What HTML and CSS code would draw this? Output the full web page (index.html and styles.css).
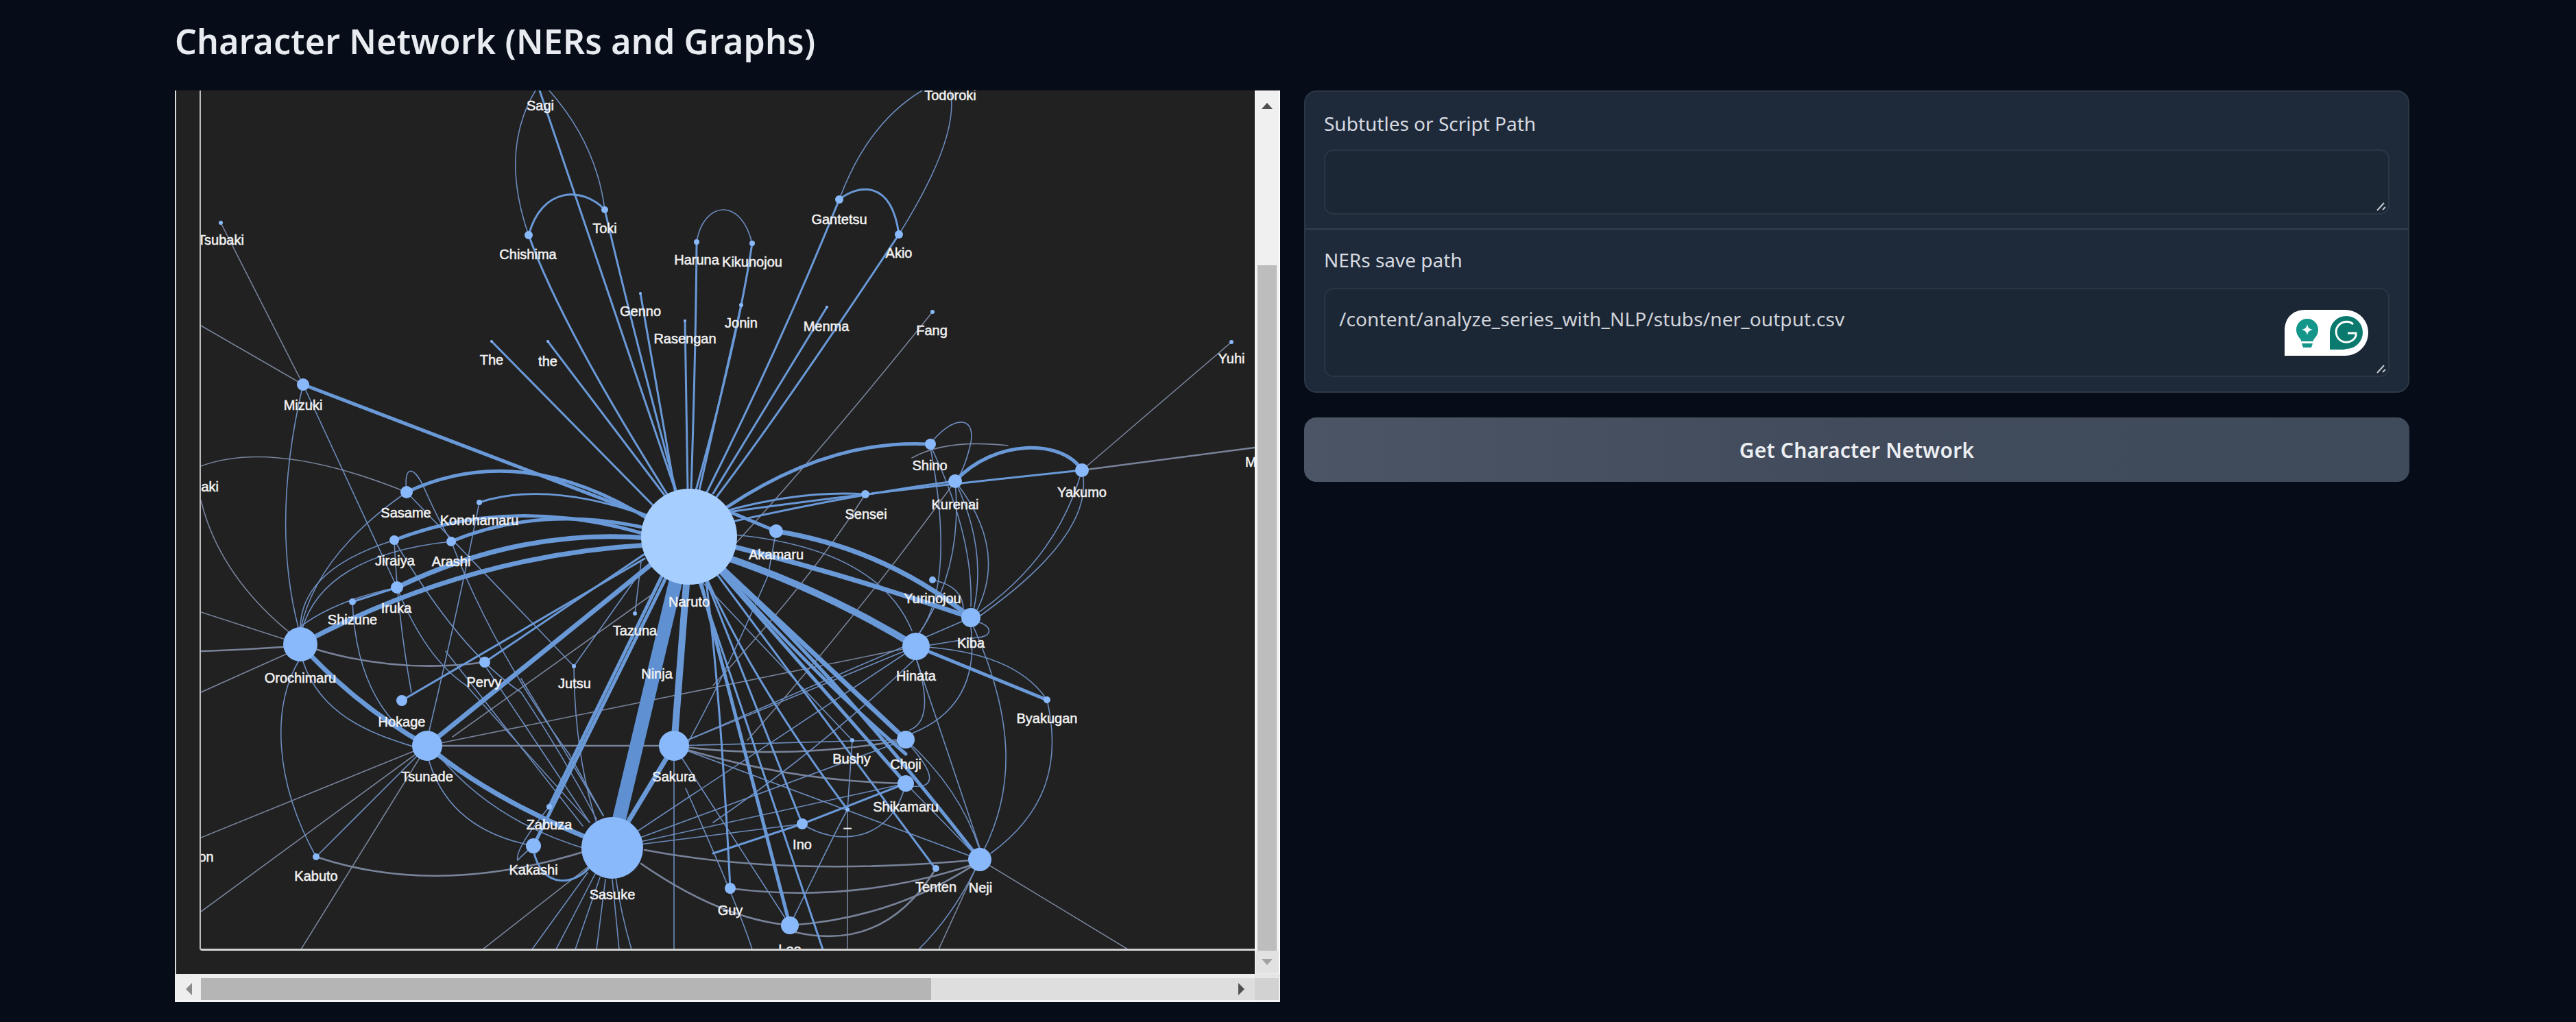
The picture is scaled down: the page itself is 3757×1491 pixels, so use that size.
FILE: index.html
```html
<!DOCTYPE html>
<html lang="en">
<head>
<meta charset="utf-8">
<title>Character Network</title>
<link rel="stylesheet" href="styles.css">
</head>
<body>
<main class="page">
  <h2 class="title">Character Network (NERs and Graphs)</h2>
  <div class="columns">
    <section class="frame">
      <div class="viewport">
        <div class="plot">
          <svg class="graph" viewBox="293 132 1537 1253" width="1537" height="1253">
            <g class="edge grey w1">
              <path d="M322,325 L442,561"/>
              <path d="M293,475 L442,561"/>
              <path d="M293,680 Q400,640 593,718"/>
              <path d="M293,730 Q320,840 425,925"/>
              <path d="M293,893 L438,940"/>
              <path d="M293,1010 L438,945"/>
              <path d="M623,1088 L293,1222"/>
              <path d="M623,1088 L293,1330"/>
              <path d="M623,1088 L439,1385"/>
              <path d="M893,1237 L704,1385"/>
              <path d="M1360,455 Q1180,680 1020,850"/>
              <path d="M1796,499 L1578,686"/>
              <path d="M1429,1254 L1645,1385"/>
              <path d="M1429,1254 L1369,1385"/>
              <path d="M950,868 L660,1075"/>
              <path d="M1236,1181 L1236,1385"/>
              <path d="M1336,943 L623,1088"/>
              <path d="M1470,650 Q1380,640 1330,668"/>
              <path d="M1262,721 Q1180,850 1040,1000"/>
              <path d="M1393,702 Q1250,900 1090,1080"/>
            </g>
            <g class="edge grey w2">
              <path d="M293,950 Q360,948 438,942"/>
              <path d="M1578,686 L1830,653"/>
              <path d="M461,1250 Q640,1310 860,1240"/>
              <path d="M623,1088 L983,1088"/>
              <path d="M1321,1079 Q1150,1110 983,1088"/>
              <path d="M1321,1143 Q1150,1140 983,1088"/>
              <path d="M940,1240 Q1150,1280 1429,1254"/>
              <path d="M1065,1296 Q1250,1320 1429,1258"/>
              <path d="M438,940 Q570,985 707,966"/>
              <path d="M935,1260 Q1050,1340 1152,1350"/>
              <path d="M1152,1350 Q1300,1340 1420,1262"/>
              <path d="M1160,1360 Q1290,1390 1365,1267"/>
            </g>
            <g class="edge blue w1">
              <path d="M771,343 Q728,220 781,132"/>
              <path d="M882,306 Q870,210 801,132"/>
              <path d="M1224,291 Q1265,180 1345,132"/>
              <path d="M1311,342 Q1400,200 1386,132"/>
              <path d="M1016,353 C1025,295 1080,285 1097,355"/>
              <path d="M442,561 Q395,760 435,915"/>
              <path d="M442,561 L579,857"/>
              <path d="M593,718 C588,675 605,680 620,715 Q640,760 658,790"/>
              <path d="M593,718 Q460,810 438,920"/>
              <path d="M575,788 Q440,830 438,915"/>
              <path d="M658,790 Q470,810 440,920"/>
              <path d="M579,857 Q470,880 420,930"/>
              <path d="M699,733 Q670,880 625,1070"/>
              <path d="M438,950 C460,1050 560,1075 605,1090"/>
              <path d="M623,1100 Q650,1210 778,1234"/>
              <path d="M461,1250 L623,1088"/>
              <path d="M461,1250 C400,1140 395,1030 438,960"/>
              <path d="M514,878 Q520,1020 605,1080"/>
              <path d="M579,857 Q620,960 680,1000 Q760,1090 860,1200"/>
              <path d="M575,788 Q580,900 600,1010"/>
              <path d="M575,788 Q670,950 760,1010 Q820,1100 870,1195"/>
              <path d="M658,790 Q720,950 830,1100 L880,1190"/>
              <path d="M593,718 L837,972"/>
              <path d="M837,972 L930,840"/>
              <path d="M926,895 L935,820"/>
              <path d="M837,972 Q838,1100 870,1200"/>
              <path d="M650,950 L850,1205"/>
              <path d="M710,975 L860,1200"/>
              <path d="M760,990 L880,1190"/>
              <path d="M638,1100 Q720,1200 860,1240"/>
              <path d="M776,1385 L857,1273"/>
              <path d="M811,1385 L868,1275"/>
              <path d="M839,1385 L875,1280"/>
              <path d="M870,1385 L883,1283"/>
              <path d="M903,1385 L893,1283"/>
              <path d="M921,1385 Q905,1330 898,1280"/>
              <path d="M983,1088 L983,1385"/>
              <path d="M983,1088 L1152,1350"/>
              <path d="M983,1088 L1429,1254"/>
              <path d="M983,1088 L1321,1079"/>
              <path d="M893,1237 L1336,943"/>
              <path d="M893,1237 L1321,1079"/>
              <path d="M893,1237 L1321,1143"/>
              <path d="M893,1237 L1170,1202"/>
              <path d="M983,1088 L1336,943"/>
              <path d="M983,1088 L1416,901"/>
              <path d="M1356,648 C1395,600 1425,610 1415,650 Q1405,690 1393,702"/>
              <path d="M1356,648 Q1395,850 1340,925"/>
              <path d="M1356,648 Q1420,780 1416,885"/>
              <path d="M1393,702 Q1440,800 1420,890"/>
              <path d="M1393,702 Q1470,800 1425,890"/>
              <path d="M1393,702 Q1405,830 1340,925"/>
              <path d="M1578,686 Q1540,820 1416,901"/>
              <path d="M1578,686 Q1600,780 1420,905"/>
              <path d="M1360,846 Q1405,855 1405,890"/>
              <path d="M1428,908 C1450,915 1445,930 1425,930 L1345,943"/>
              <path d="M1070,780 Q1280,800 1330,920"/>
              <path d="M1336,943 Q1480,950 1527,1021"/>
              <path d="M1527,1021 C1550,1120 1520,1190 1445,1245"/>
              <path d="M1420,915 C1480,1050 1480,1150 1435,1240"/>
              <path d="M1336,960 Q1365,1050 1327,1065"/>
              <path d="M1416,915 Q1430,1030 1330,1070"/>
              <path d="M1336,960 L1430,1240"/>
              <path d="M1321,1079 Q1400,1150 1429,1240"/>
              <path d="M1321,1143 L1429,1254"/>
              <path d="M1243,1080 L1236,1181"/>
              <path d="M1170,1202 C1220,1235 1300,1230 1321,1143"/>
              <path d="M1330,1147 C1365,1150 1365,1130 1325,1085"/>
              <path d="M1152,1350 Q1220,1210 1236,1181"/>
              <path d="M1025,850 L1243,1080"/>
              <path d="M1429,1254 Q1395,1330 1340,1385"/>
              <path d="M801,1177 Q750,1240 755,1255 Q770,1240 778,1234"/>
              <path d="M1097,1385 Q1080,1330 1000,1150"/>
              <path d="M1132,775 L1120,840 Q1060,980 1000,1090"/>
              <path d="M1336,960 Q1200,1090 1040,1200"/>
            </g>
            <g class="edge blue w3">
              <path d="M771,343 C790,272 850,272 882,306"/>
              <path d="M1224,291 C1250,270 1300,260 1311,342"/>
              <path d="M787,132 L1000,760"/>
              <path d="M771,343 Q820,480 985,740"/>
              <path d="M882,306 Q925,490 990,730"/>
              <path d="M934,428 L985,720"/>
              <path d="M999,468 L1003,715"/>
              <path d="M1016,353 Q1015,500 1008,715"/>
              <path d="M1097,355 Q1075,500 1015,715"/>
              <path d="M1081,445 L1020,715"/>
              <path d="M1224,291 Q1140,500 1030,720"/>
              <path d="M1206,448 L1040,720"/>
              <path d="M1311,342 Q1140,600 1045,725"/>
              <path d="M717,498 L960,745"/>
              <path d="M799,498 L975,730"/>
              <path d="M699,733 Q800,700 950,755"/>
              <path d="M514,878 L579,857"/>
              <path d="M707,966 L945,805"/>
              <path d="M586,1022 L940,815"/>
              <path d="M1060,745 Q1170,715 1262,721"/>
              <path d="M1050,765 Q1250,720 1393,702"/>
              <path d="M1040,750 Q1250,720 1578,686"/>
              <path d="M1005,783 L1364,1267"/>
              <path d="M1005,783 Q1075,965 1236,1181"/>
              <path d="M1030,850 Q1050,1000 1065,1296"/>
              <path d="M1170,1202 L1321,1143"/>
              <path d="M1005,783 L1170,1202"/>
              <path d="M1020,850 L1200,1385"/>
              <path d="M1040,1245 L1170,1202"/>
              <path d="M778,1240 C790,1300 840,1290 860,1265"/>
            </g>
            <g class="edge blue w5">
              <path d="M442,561 L950,755"/>
              <path d="M593,718 Q760,640 950,760"/>
              <path d="M575,788 Q750,720 950,782"/>
              <path d="M658,790 Q790,735 950,772"/>
              <path d="M1060,740 Q1210,640 1356,648"/>
              <path d="M1060,745 L1132,775"/>
              <path d="M1393,702 C1450,640 1550,640 1578,686"/>
              <path d="M1336,943 L1527,1021"/>
              <path d="M1005,783 L1152,1350"/>
              <path d="M801,1177 L985,800"/>
              <path d="M778,1234 L975,835"/>
              <path d="M1040,820 Q1200,960 1429,1254"/>
              <path d="M1005,783 L1321,1143"/>
              <path d="M1030,805 Q1160,960 1321,1100"/>
            </g>
            <g class="edge blue w7">
              <path d="M438,940 Q680,810 945,795"/>
              <path d="M579,857 Q760,770 945,785"/>
              <path d="M623,1088 L960,815"/>
              <path d="M438,940 Q520,1030 623,1088"/>
              <path d="M623,1088 Q720,1170 893,1237"/>
              <path d="M1132,775 Q1290,800 1416,901"/>
              <path d="M1060,795 Q1240,840 1416,901"/>
              <path d="M1005,783 L1321,1079"/>
              <path d="M893,1237 L983,1088"/>
            </g>
            <g class="edge blue w10">
              <path d="M983,1088 L1005,800"/>
              <path d="M1050,810 Q1200,860 1336,943"/>
            </g>
            <g class="edge deep w18">
              <path d="M893,1237 L985,850"/>
            </g>

            <g class="node">
              <circle cx="882" cy="306" r="5"/><circle cx="771" cy="343" r="6"/>
              <circle cx="322" cy="325" r="3"/><circle cx="934" cy="428" r="2"/>
              <circle cx="999" cy="468" r="2"/><circle cx="1016" cy="353" r="4"/>
              <circle cx="1097" cy="355" r="4"/><circle cx="1081" cy="445" r="3"/>
              <circle cx="1224" cy="291" r="6"/><circle cx="1311" cy="342" r="6"/>
              <circle cx="1206" cy="448" r="2"/><circle cx="1360" cy="455" r="3"/>
              <circle cx="1796" cy="499" r="3"/><circle cx="442" cy="561" r="9"/>
              <circle cx="717" cy="498" r="2"/><circle cx="799" cy="498" r="2"/>
              <circle cx="593" cy="718" r="9"/><circle cx="699" cy="733" r="4"/>
              <circle cx="575" cy="788" r="7"/><circle cx="658" cy="790" r="7"/>
              <circle cx="579" cy="857" r="9"/><circle cx="514" cy="878" r="5"/>
              <circle cx="438" cy="940" r="25"/><circle cx="926" cy="895" r="3"/>
              <circle cx="707" cy="966" r="8"/><circle cx="837" cy="972" r="3"/>
              <circle cx="1357" cy="648" r="8"/><circle cx="1393" cy="702" r="10"/>
              <circle cx="1578" cy="686" r="10"/><circle cx="1262" cy="721" r="6"/>
              <circle cx="1132" cy="775" r="10"/><circle cx="1360" cy="846" r="5"/>
              <circle cx="1416" cy="901" r="14"/><circle cx="1336" cy="943" r="20"/>
              <circle cx="1527" cy="1021" r="5"/><circle cx="1321" cy="1079" r="13"/>
              <circle cx="586" cy="1022" r="8"/><circle cx="623" cy="1088" r="22"/>
              <circle cx="983" cy="1088" r="22"/><circle cx="801" cy="1177" r="4"/>
              <circle cx="778" cy="1234" r="11"/><circle cx="461" cy="1250" r="5"/>
              <circle cx="1243" cy="1080" r="3"/><circle cx="1321" cy="1143" r="12"/>
              <circle cx="1236" cy="1181" r="3"/><circle cx="1170" cy="1202" r="8"/>
              <circle cx="1429" cy="1254" r="17"/><circle cx="1365" cy="1267" r="5"/>
              <circle cx="1065" cy="1296" r="8"/><circle cx="1152" cy="1350" r="13"/>
              <circle cx="893" cy="1237" r="45"/>
            </g>
            <circle class="hub" cx="1005" cy="783" r="70"/>

            <g class="label">
              <text x="788" y="161">Sagi</text><text x="1386" y="146">Todoroki</text>
              <text x="322" y="357">Tsubaki</text><text x="882" y="340">Toki</text>
              <text x="770" y="378">Chishima</text><text x="934" y="461">Genno</text>
              <text x="999" y="501">Rasengan</text><text x="1016" y="386">Haruna</text>
              <text x="1097" y="389">Kikunojou</text><text x="1224" y="327">Gantetsu</text>
              <text x="1311" y="376">Akio</text><text x="1081" y="478">Jonin</text>
              <text x="1205" y="483">Menma</text><text x="1359" y="489">Fang</text>
              <text x="1796" y="530">Yuhi</text><text x="717" y="532">The</text>
              <text x="799" y="534">the</text><text x="442" y="598">Mizuki</text>
              <text x="289" y="717">Sasaki</text><text x="592" y="755">Sasame</text>
              <text x="699" y="766">Konohamaru</text><text x="576" y="825">Jiraiya</text>
              <text x="658" y="826">Arashi</text><text x="578" y="894">Iruka</text>
              <text x="514" y="911">Shizune</text><text x="438" y="996">Orochimaru</text>
              <text x="1005" y="885">Naruto</text><text x="926" y="927">Tazuna</text>
              <text x="958" y="990">Ninja</text><text x="706" y="1002">Pervy</text>
              <text x="838" y="1004">Jutsu</text><text x="1356" y="686">Shino</text>
              <text x="1393" y="743">Kurenai</text><text x="1578" y="725">Yakumo</text>
              <text x="1263" y="757">Sensei</text><text x="1132" y="816">Akamaru</text>
              <text x="1360" y="880">Yurinojou</text><text x="1416" y="945">Kiba</text>
              <text x="1336" y="993">Hinata</text><text x="1527" y="1055">Byakugan</text>
              <text x="1321" y="1122">Choji</text><text x="586" y="1060">Hokage</text>
              <text x="623" y="1140">Tsunade</text><text x="983" y="1140">Sakura</text>
              <text x="801" y="1210">Zabuza</text><text x="778" y="1276">Kakashi</text>
              <text x="461" y="1285">Kabuto</text><text x="290" y="1257">Jiron</text>
              <text x="1242" y="1114">Bushy</text><text x="1321" y="1184">Shikamaru</text>
              <text x="1236" y="1214">–</text><text x="1170" y="1239">Ino</text>
              <text x="1430" y="1302">Neji</text><text x="1365" y="1301">Tenten</text>
              <text x="1065" y="1335">Guy</text><text x="1152" y="1392">Lee</text>
              <text x="893" y="1312">Sasuke</text><text x="1835" y="681">Mito</text>
            </g>
          </svg>
        </div>
      </div>
      <div class="vbar">
        <span class="arrow"><i class="tri up"></i></span>
        <div class="vthumb"></div>
        <span class="arrow"><i class="tri down"></i></span>
      </div>
      <div class="hbar">
        <span class="arrow"><i class="tri left"></i></span>
        <div class="hthumb"></div>
        <span class="arrow"><i class="tri right"></i></span>
      </div>
      <div class="corner"></div>
    </section>

    <section class="side">
      <div class="panel">
        <div class="field field-first">
          <label class="field-label">Subtutles or Script Path</label>
          <div class="input input-short">
            <svg class="grip" viewBox="0 0 16 16" width="16" height="16"><path d="M2 14 L12 3 M10 13 L14 9"/></svg>
          </div>
        </div>
        <div class="field">
          <label class="field-label">NERs save path</label>
          <div class="input input-tall">
            <span class="value">/content/analyze_series_with_NLP/stubs/ner_output.csv</span>
            <svg class="grammarly" viewBox="0 0 122 67" width="122" height="67">
              <path class="gr-bg" d="M0 67 V30 C0 12 12 0 30 0 H88 C107 0 122 15 122 33 C122 52 107 67 88 67 Z"/>
              <path class="gr-bulb" d="M33 13 C42 13 49 20 49 29 C49 36 45 40 42 44 V46 H24 V44 C21 40 17 36 17 29 C17 20 24 13 33 13 Z M25 49 H41 L39 55 H27 Z"/>
              <path class="gr-star" d="M33 21 C34 26 36 28 41 29 C36 30 34 32 33 37 C32 32 30 30 25 29 C30 28 32 26 33 21 Z"/>
              <path class="gr-g" d="M66 58 V33 A24 24 0 1 1 90 57 L86 58 Z"/>
              <path class="gr-letter" d="M100 21 A15 15 0 1 0 104 38 V34 H92"/>
            </svg>
            <svg class="grip" viewBox="0 0 16 16" width="16" height="16"><path d="M2 14 L12 3 M10 13 L14 9"/></svg>
          </div>
        </div>
      </div>
      <button class="action">Get Character Network</button>
    </section>
  </div>
</main>
</body>
</html>
```
FILE: styles.css
```css
html, body {
  margin: 0;
  padding: 0;
  background: #070d18;
}
.page {
  width: 3757px;
  height: 1491px;
  box-sizing: border-box;
  padding: 0 243px 0 255px;
  overflow: hidden;
  font-family: "Noto Sans", "Open Sans", sans-serif;
  color: #e5e7eb;
}
.title {
  margin: 0;
  height: 132px;
  padding-top: 28px;
  box-sizing: border-box;
  font-size: 50px;
  line-height: 64px;
  font-weight: 600;
  letter-spacing: 0.2px;
  color: #e8ebf0;
}
.columns {
  display: flex;
  gap: 35px;
  align-items: flex-start;
}

/* embedded network frame */
.frame {
  width: 1612px;
  height: 1330px;
  flex: none;
  display: grid;
  grid-template-columns: 1fr 37px;
  grid-template-rows: 1fr 41px;
}
.viewport {
  background: #212121;
  border-left: 2px solid #dcdcdc;
  padding: 0 0 34px 34px;
  min-width: 0;
  min-height: 0;
}
.plot {
  height: 100%;
  box-sizing: border-box;
  border-left: 2px solid #bdbdbd;
  border-bottom: 3px solid #d2d2d2;
  border-bottom-left-radius: 4px;
  overflow: hidden;
}
.graph {
  display: block;
}
.edge {
  fill: none;
  stroke-linecap: round;
}
.edge.grey { stroke: #78839a; }
.edge.blue { stroke: #6a99d8; }
.edge.blue.w1 { stroke: #6c8cbe; }
.edge.deep { stroke: #5f90d2; }
.w1 { stroke-width: 1.6px; }
.w2 { stroke-width: 2.6px; }
.w3 { stroke-width: 3px; }
.w5 { stroke-width: 5px; }
.w7 { stroke-width: 7px; }
.w10 { stroke-width: 10px; }
.w18 { stroke-width: 20px; }
.node { fill: #89b9fb; }
.hub { fill: #a6cfff; }
.label text {
  font-family: "Liberation Sans", Arial, sans-serif;
  font-size: 20px;
  fill: #f2f2f2;
  text-anchor: middle;
  stroke: #f2f2f2;
  stroke-width: 0.5px;
}

/* scrollbars */
.vbar {
  background: #f0f0f0;
  border-left: 1px solid #fff;
  border-right: 2px solid #fff;
  display: flex;
  flex-direction: column;
  align-items: stretch;
}
.vbar .arrow {
  height: 44px;
  display: flex;
  align-items: center;
  justify-content: center;
}
.vbar .arrow:last-child {
  height: 33px;
  background: #e2e2e2;
}
.vthumb {
  margin: 211px 3px 0;
  height: 1000px;
  background: #bdbdbd;
}
.hbar {
  background: #dedede;
  border-top: 6px solid #ededed;
  border-bottom: 3px solid #f4f4f4;
  border-left: 2px solid #f4f4f4;
  display: flex;
  align-items: center;
}
.hbar .arrow {
  width: 36px;
  display: flex;
  align-items: center;
  justify-content: center;
  flex: none;
}
.hbar .arrow:first-child {
  background: #eeeeee;
  height: 100%;
}
.hbar .arrow:last-child {
  margin-left: auto;
  width: 40px;
}
.hthumb {
  width: 1065px;
  height: 100%;
  background: #b5b5b5;
}
.corner {
  background: #d2d2d2;
  border-right: 2px solid #f2f2f2;
  border-bottom: 3px solid #f2f2f2;
  border-top: 6px solid #e6e6e6;
}
.tri {
  display: block;
  width: 0;
  height: 0;
  border-style: solid;
  border-color: transparent;
}
.tri.up { border-width: 0 8px 9px; border-bottom-color: #505050; }
.tri.down { border-width: 9px 8px 0; border-top-color: #a3a3a3; }
.tri.left { border-width: 9px 9px 9px 0; border-right-color: #8a8a8a; }
.tri.right { border-width: 9px 0 9px 9px; border-left-color: #505050; }

/* right column */
.side {
  width: 1612px;
  flex: none;
  display: flex;
  flex-direction: column;
  gap: 36px;
}
.panel {
  background: #1e2a3a;
  border: 2px solid #2c3746;
  border-radius: 18px;
  box-sizing: border-box;
  height: 441px;
}
.field {
  padding: 0 27px;
}
.field-first {
  height: 201px;
  box-sizing: border-box;
  border-bottom: 2px solid #323e4f;
}
.field-label {
  display: block;
  padding-top: 26px;
  height: 58px;
  box-sizing: content-box;
  font-size: 28px;
  line-height: 40px;
  color: #d6dae0;
}
.field + .field .field-label {
  padding-top: 24px;
  height: 61px;
}
.input {
  position: relative;
  background: #1c2736;
  border: 2px solid #2a3545;
  border-radius: 14px;
  box-sizing: border-box;
}
.input-short { height: 95px; }
.input-tall {
  height: 130px;
  padding: 23px 20px 0;
}
.value {
  display: block;
  font-size: 28px;
  line-height: 40px;
  letter-spacing: 0.1px;
  color: #d0d4da;
}
.grip {
  position: absolute;
  right: 2px;
  bottom: 2px;
}
.grip path {
  fill: none;
  stroke: #c4c8cf;
  stroke-width: 2px;
}
.grammarly {
  position: absolute;
  left: 1399px;
  top: 30px;
}
.gr-bg { fill: #ffffff; }
.gr-bulb { fill: #14978a; }
.gr-star { fill: #ffffff; }
.gr-g { fill: #0b7a6e; }
.gr-letter {
  fill: none;
  stroke: #ffffff;
  stroke-width: 3px;
}
.action {
  height: 94px;
  border: 0;
  border-radius: 18px;
  background: linear-gradient(90deg, #4b5565, #414b5c 50%, #3f4a5a);
  font-family: inherit;
  font-size: 30px;
  font-weight: 600;
  letter-spacing: 0.2px;
  color: #eceef1;
}
```
